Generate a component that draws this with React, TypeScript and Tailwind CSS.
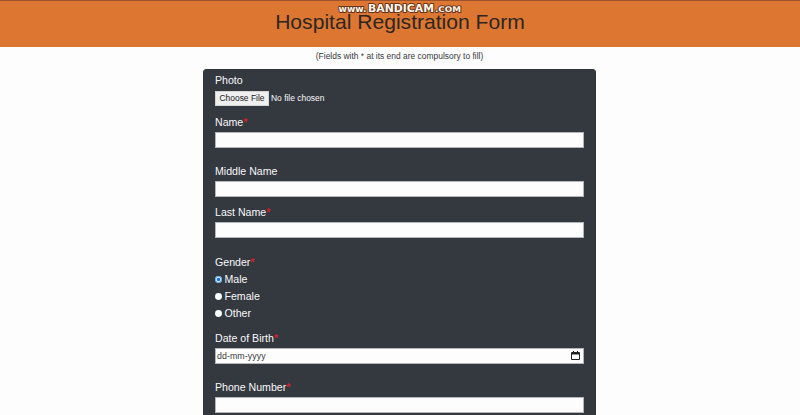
import type { ReactNode } from "react";

function Label({ children, required = false }: { children: ReactNode; required?: boolean }) {
  return (
    <label className="block h-[17px] text-[10.6px] leading-[17px] whitespace-nowrap text-[#f8f8f9]">
      {children}
      {required && <span className="font-bold text-[#d31f2b]">*</span>}
    </label>
  );
}

function TextField({ label, required, className }: { label: string; required?: boolean; className: string }) {
  return (
    <div className={className}>
      <Label required={required}>{label}</Label>
      <input
        aria-label={label}
        className="mt-px block h-4 w-full appearance-none border border-[#b4b5b8] bg-[#fefdfe] px-[2px] text-[9px] outline-none"
      />
    </div>
  );
}

function Radio({ label, checked = false }: { label: string; checked?: boolean }) {
  return (
    <div className="flex h-[17px] items-center gap-[2.5px] text-[10.6px] leading-[17px] text-[#f8f8f9]">
      <svg viewBox="0 0 14 14" className="size-[7px]" aria-hidden="true">
        <circle cx="7" cy="7" r="6.9" fill="#fdfdfe" />
        {checked && <circle cx="7" cy="7" r="6.2" fill="none" stroke="#1a7cf0" strokeWidth="1.5" />}
        {checked && <circle cx="7" cy="7" r="3.5" fill="#0a6fe8" />}
      </svg>
      {label}
    </div>
  );
}

function Watermark() {
  return (
    <svg
      viewBox="0 0 128 16"
      className="absolute top-0 left-[336px] h-4 w-32"
      fontFamily="'DejaVu Sans', 'Liberation Sans', sans-serif"
      fontWeight="700"
      fill="#fff7ec"
      stroke="#63331a"
      strokeWidth="1.8"
      strokeLinejoin="round"
      paintOrder="stroke"
    >
      <text x="2.5" y="12" fontSize="8.5" textLength="28" lengthAdjust="spacingAndGlyphs">www.</text>
      <text x="32" y="12" fontSize="10" textLength="66" lengthAdjust="spacingAndGlyphs">BANDICAM</text>
      <text x="99" y="12" fontSize="7.8" textLength="26" lengthAdjust="spacingAndGlyphs">.COM</text>
    </svg>
  );
}

export default function App() {
  return (
    <div className="relative h-[415px] w-[800px] overflow-hidden bg-[#fefdfe] font-['Liberation_Sans',Arial,sans-serif] text-[#212529]">
      <header className="h-[47px] border-t border-[#9a532c] bg-[#dc7631] pt-[8px]">
        <h1 className="text-center text-[21.1px] leading-[26px] text-[#2c2724]">Hospital Registration Form</h1>
      </header>
      <Watermark />
      <p className="mt-[3px] h-[13px] pr-px text-center text-[8.45px] leading-[13px] text-[#36383b]">
        (Fields with * at its end are compulsory to fill)
      </p>
      <form className="mt-[6px] ml-[203px] h-[400px] w-[393px] rounded-[3px] border border-[#31353c] bg-[#343940] px-[11px] pt-[2px]">
        <Label>Photo</Label>
        <div className="mt-[2px] flex h-[15px] items-center gap-[2px] text-[8.45px]">
          <button type="button" className="h-[15px] w-[54px] border border-[#d5d5d6] bg-[#efefef] text-center leading-[13px] whitespace-nowrap text-[#202124]">
            Choose File
          </button>
          <span className="text-[#f8f8f9]">No file chosen</span>
        </div>
        <TextField className="mt-[8px]" label="Name" required />
        <TextField className="mt-[15px]" label="Middle Name" />
        <TextField className="mt-[7px]" label="Last Name" required />
        <div className="mt-[16px]">
          <Label required>Gender</Label>
          <Radio label="Male" checked />
          <Radio label="Female" />
          <Radio label="Other" />
        </div>
        <div className="mt-[8px]">
          <Label required>Date of Birth</Label>
          <div className="mt-px flex h-4 items-center justify-between border border-[#b4b5b8] bg-[#fefdfe] pr-[3px] pl-[1px] text-[8.8px] text-[#36383b]">
            <span className="pt-px tracking-[0.08px]">dd-mm-yyyy</span>
            <svg viewBox="0 0 9 10" className="h-[10px] w-[9px]" fill="#202124" aria-hidden="true">
              <path d="M1 1h1V0h1v1h3V0h1v1h1a1 1 0 0 1 1 1v6a1 1 0 0 1-1 1H1a1 1 0 0 1-1-1V2a1 1 0 0 1 1-1Zm0 2.5V8h7V3.5Z" fillRule="evenodd" />
            </svg>
          </div>
        </div>
        <TextField className="mt-[15px]" label="Phone Number" required />
      </form>
    </div>
  );
}
